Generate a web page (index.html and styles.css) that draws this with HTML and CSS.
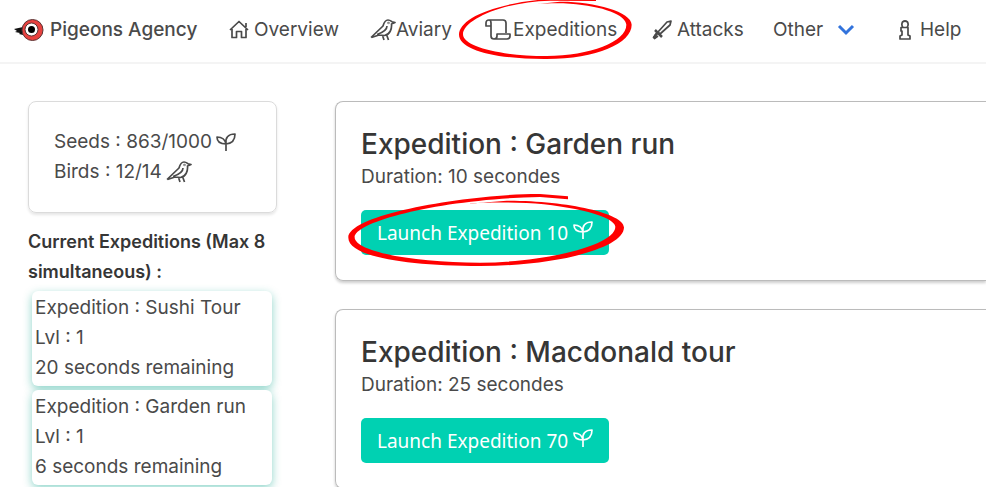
FILE: index.html
```html
<!DOCTYPE html>
<html lang="en">
<head>
<meta charset="utf-8">
<title>Pigeons Agency</title>
<meta name="viewport" content="width=device-width, initial-scale=1">
<link rel="stylesheet" href="styles.css">
</head>
<body>
<svg class="sprite" aria-hidden="true">
  <symbol id="bird" viewBox="0 0 26 22">
    <path d="M1 18.500L13 7C14 3.500 15 1 18 1C20 1 21 2 22 2.700L25 3.500L21.500 5C22 10 20 15.500 14.500 16.500L9 16L1.500 18.500M17 7C17 11 13 13.500 7 15.500M12.500 16.500L14 21M16.500 15.500L18.500 21"/>
    <circle cx="18.500" cy="4" r=".3"/>
  </symbol>
  <symbol id="sprout" viewBox="0 0 20 18">
    <path d="M10 18V11C9 6 6 4 1 4C1 8.500 4 11 10 11M10 11C9 5 12 1 19 1C19 7 16 10.500 10 11"/>
  </symbol>
</svg>
<header>
  <nav class="navbar">
    <a class="brand" href="#">
      <svg class="logo" viewBox="0 0 30 22" aria-hidden="true">
        <path d="M0 10L9 8V16L5 15L6 14L1 13L3 12Z" fill="#111"/>
        <circle cx="18.500" cy="11" r="10.500" fill="#e8413f" stroke="#5b3434" stroke-width="1"/>
        <circle cx="17.500" cy="10.500" r="6.500" fill="#fff" stroke="#5b3434" stroke-width="1"/>
        <circle cx="17.500" cy="10.500" r="3.500" fill="#000"/>
      </svg>
      <span>Pigeons Agency</span>
    </a>
    <a class="nav-item" href="#">
      <svg class="icon small" viewBox="0 0 20 20" aria-hidden="true"><path d="M1 10L10 1.500L19 10M3 9V17.500H7.500V11.500H12.500V17.500H17V9M17 7V3"/></svg>
      <span>Overview</span>
    </a>
    <a class="nav-item" href="#"><svg class="icon bird" aria-hidden="true"><use href="#bird"/></svg><span>Aviary</span></a>
    <a class="nav-item marked" href="#">
      <svg class="icon scroll" viewBox="0 0 26 22" aria-hidden="true"><path d="M6 7H1V4Q1 1 4 1H18Q21 1 21 4V14M4 1Q6 1 6 4V17Q6 20 9 20H22Q25 20 25 17V15H12V17Q12 20 9 20"/></svg>
      <span>Expeditions</span>
      <svg class="mark mark-nav" viewBox="0 0 570 192" aria-hidden="true"><path d="M438 -2L400 -7C160 -7 27 50 27 104C27 150 140 178 290 177C440 176 545 130 545 74C545 35 430 4 330 5L255 13C300 9 330 10 360 11C460 18 528 45 529 74C529 125 420 167 290 168C150 168 39 140 39 103C39 60 160 5 300 2L438 3Z"/></svg>
    </a>
    <a class="nav-item" href="#">
      <svg class="icon small" viewBox="0 0 20 20" aria-hidden="true"><path d="M6 12L15 2L19 1L18 5L8 14ZM4 14L1.500 17.500L2.500 18.500L6 16"/><path class="heavy" d="M3 10L10 17M5 13L2 18"/></svg>
      <span>Attacks</span>
    </a>
    <a class="nav-item other" href="#"><span>Other</span><svg class="chevron" viewBox="0 0 18 12" aria-hidden="true"><path d="M2 2L9 9L16 2"/></svg></a>
    <a class="nav-item" href="#">
      <svg class="icon info" viewBox="0 0 12 20" aria-hidden="true"><path d="M3.500 2Q6 0 8.500 2Q10 5 8 7.500H4Q2 5 3.500 2ZM4 7.500H2V11H3V15L1 16V19H11V16L9 15V7.500H7.500"/></svg>
      <span>Help</span>
    </a>
  </nav>
</header>
<main class="page">
  <aside>
    <section class="card">
      <p class="stat">Seeds : 863/1000 <svg class="icon sprout" aria-hidden="true"><use href="#sprout"/></svg></p>
      <p class="stat">Birds : 12/14 <svg class="icon bird" aria-hidden="true"><use href="#bird"/></svg></p>
    </section>
    <h2 class="side-title">Current Expeditions (Max 8 simultaneous) :</h2>
    <ul class="running">
      <li><p>Expedition : Sushi Tour</p><p>Lvl : 1</p><p>20 seconds remaining</p></li>
      <li><p>Expedition : Garden run</p><p>Lvl : 1</p><p>6 seconds remaining</p></li>
    </ul>
  </aside>
  <div class="expeditions">
    <article class="card wide">
      <h1>Expedition : Garden run</h1>
      <p>Duration: 10 secondes</p>
      <button class="launch" type="button"><span>Launch Expedition 10</span><svg class="icon sprout" aria-hidden="true"><use href="#sprout"/></svg>
        <svg class="mark mark-launch" viewBox="0 0 870 255" aria-hidden="true"><path d="M684 34L600 27C400 26 25 85 25 158C25 215 200 243 420 243C650 243 852 190 852 127C852 85 680 46 500 47L385 56C430 52 500 52 560 54C700 62 825 95 826 125C826 180 620 232 420 233C220 233 44 200 44 157C44 110 300 42 600 36L684 43Z"/></svg>
      </button>
    </article>
    <article class="card wide">
      <h1>Expedition : Macdonald tour</h1>
      <p>Duration: 25 secondes</p>
      <button class="launch" type="button"><span>Launch Expedition 70</span><svg class="icon sprout" aria-hidden="true"><use href="#sprout"/></svg></button>
    </article>
  </div>
</main>
</body>
</html>
```
FILE: styles.css
```css
* { box-sizing: border-box; }
html { overflow: hidden; }
body {
  margin: 0;
  background: #fff;
  color: #4a4a4a;
  font-family: Inter, "Liberation Sans", sans-serif;
  font-size: 19px;
  line-height: 30px;
}
h1, h2, p, ul { margin: 0; padding: 0; }
.sprite { position: absolute; width: 0; height: 0; }
.icon { fill: none; stroke: currentColor; stroke-width: 1.7; stroke-linejoin: round; flex: none; }
.icon.small { width: 20px; height: 20px; margin-right: 5px; }
.icon.bird { width: 26px; height: 22px; }
.icon.scroll { width: 26px; height: 22px; margin-right: 2px; }
.icon.info { width: 12px; height: 20px; margin-right: 9px; }
.icon.sprout { width: 20px; height: 18px; }
.heavy { stroke-width: 2.5; }

.navbar {
  display: grid;
  grid-template-columns: 215px 141px 115px 167px 121px 126px auto;
  align-items: center;
  height: 64px;
  padding: 0 0 2px 14px;
  border-bottom: 2px solid #f4f4f4;
}
.brand, .nav-item { display: flex; align-items: center; color: inherit; text-decoration: none; white-space: nowrap; }
.brand { font-weight: 500; }
.logo { width: 30px; height: 22px; margin-right: 6px; }
.chevron { width: 18px; height: 12px; fill: none; stroke: #3273dc; stroke-width: 3; }
.other { gap: 14px; }

.marked, .launch { position: relative; }
.mark { position: absolute; fill: #f00; overflow: visible; pointer-events: none; }
.mark-nav { width: 190px; height: 64px; left: -35px; top: -15px; }
.mark-launch { width: 290px; height: 85px; left: -21px; top: -25px; }

.page { display: grid; grid-template-columns: 249px minmax(0, 1fr); gap: 58px; padding: 37px 0 0 28px; }
.card { border: 1px solid #dbdbdb; border-radius: 8px; padding: 25px; box-shadow: 0 2px 3px rgba(10, 10, 10, .1); }
.stat { display: flex; align-items: center; gap: 4px; }
aside .card { min-height: 112px; }
.side-title { margin: 14px 0 4px; font-size: 18px; font-weight: 600; color: #363636; }
.running { display: grid; gap: 4px; padding: 0 5px 0 4px; list-style: none; }
.running li { padding: 2px 3px 3px 3px; border-radius: 6px; background: #fff; box-shadow: 0 3px 10px rgba(0, 160, 135, .45); }

.expeditions { display: grid; gap: 28px; align-content: start; }
.wide { border-color: #bbb; border-right: 0; border-radius: 8px 0 0 8px; box-shadow: 0 2px 3px rgba(10, 10, 10, .2); }
h1 { font-size: 28px; line-height: 35px; font-weight: 500; color: #363636; }
.launch {
  display: flex;
  align-items: center;
  gap: 5px;
  height: 45px;
  margin-top: 18px;
  padding: 0 16px;
  border: 0;
  border-radius: 5px;
  background: #00d1b2;
  color: #fff;
  font: 19px/30px "Noto Sans", "Open Sans", sans-serif;
  white-space: nowrap;
}
.launch .sprout { margin-bottom: 6px; }
```
